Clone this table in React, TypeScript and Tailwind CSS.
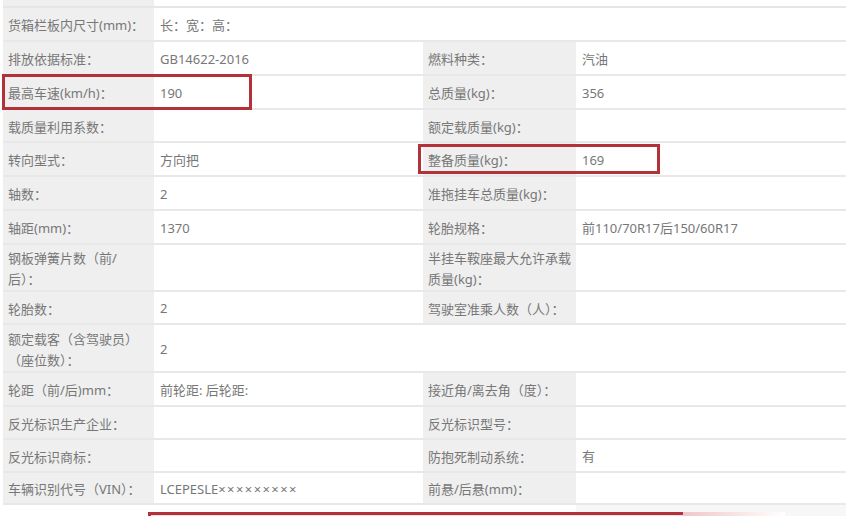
type Cell = { label: string; value?: string };
type Row = { h: number; left: Cell; right?: Cell };

const rows: Row[] = [
  { h: 34, left: { label: "货箱栏板内尺寸(mm)：", value: "长：宽：高：" } },
  { h: 34, left: { label: "排放依据标准：", value: "GB14622-2016" }, right: { label: "燃料种类：", value: "汽油" } },
  { h: 34, left: { label: "最高车速(km/h)：", value: "190" }, right: { label: "总质量(kg)：", value: "356" } },
  { h: 33, left: { label: "载质量利用系数：" }, right: { label: "额定载质量(kg)：" } },
  { h: 34, left: { label: "转向型式：", value: "方向把" }, right: { label: "整备质量(kg)：", value: "169" } },
  { h: 34, left: { label: "轴数：", value: "2" }, right: { label: "准拖挂车总质量(kg)：" } },
  { h: 34, left: { label: "轴距(mm)：", value: "1370" }, right: { label: "轮胎规格：", value: "前110/70R17后150/60R17" } },
  { h: 47, left: { label: "钢板弹簧片数（前/\n后）：" }, right: { label: "半挂车鞍座最大允许承载\n质量(kg)：" } },
  { h: 33, left: { label: "轮胎数：", value: "2" }, right: { label: "驾驶室准乘人数（人）：" } },
  { h: 48, left: { label: "额定载客（含驾驶员）\n（座位数）：", value: "2" } },
  { h: 34, left: { label: "轮距（前/后)mm：", value: "前轮距: 后轮距:" }, right: { label: "接近角/离去角（度）：" } },
  { h: 33, left: { label: "反光标识生产企业：" }, right: { label: "反光标识型号：" } },
  { h: 33, left: { label: "反光标识商标：" }, right: { label: "防抱死制动系统：", value: "有" } },
  { h: 32, left: { label: "车辆识别代号（VIN）：", value: "LCEPESLE" }, right: { label: "前悬/后悬(mm)：" } },
];

function Label({ text }: { text: string }) {
  return (
    <div className="flex items-center bg-[#efefef] pl-[5px] pt-[3px] leading-[21px] whitespace-pre-line">
      {text}
    </div>
  );
}

function Value({ text, span, vin }: { text?: string; span?: boolean; vin?: boolean }) {
  return (
    <div className={span ? "col-span-3 flex items-center bg-white pl-[6px] pt-[3px]" : "flex items-center bg-white pl-[6px] pt-[3px]"}>
      {text}
      {vin && <span className="tracking-[1.4px]">×××××××××</span>}
    </div>
  );
}

export default function App() {
  return (
    <div
      className="relative w-[852px] h-[516px] overflow-hidden bg-white text-[13px] text-[#777777]"
      style={{ fontFamily: '"Noto Sans", "Noto Sans CJK SC", sans-serif' }}
    >
      <div className="ml-[3px] w-[843px] border-r-2 border-[#e9e9e9]">
        {/* partial row at top */}
        <div className="grid grid-cols-[151px_269px_153px_270px] h-[8px] border-b-2 border-[#e6e6e6]">
          <div className="bg-[#efefef]" />
          <div className="col-span-3 bg-white" />
        </div>

        {rows.map((r, i) => (
          <div
            key={i}
            className="grid grid-cols-[151px_269px_153px_270px] border-b-2 border-[#e8e8e8]"
            style={{ height: r.h }}
          >
            <Label text={r.left.label} />
            <Value text={r.left.value} span={!r.right} vin={i === rows.length - 1} />
            {r.right && (
              <>
                <Label text={r.right.label} />
                <Value text={r.right.value} />
              </>
            )}
          </div>
        ))}

        {/* partial row at bottom */}
        <div className="grid grid-cols-[151px_269px_153px_270px] h-[12px]">
          <div className="bg-white" />
          <div className="bg-white" />
          <div className="bg-white" />
          <div className="bg-[#f7f7f7]" />
        </div>
      </div>

      {/* red annotation boxes */}
      <div className="absolute left-[2px] top-[74px] w-[250px] h-[36px] border-[3px] border-[#b3323a]" />
      <div className="absolute left-[418px] top-[144px] w-[242px] h-[30px] border-[3px] border-[#b3323a]" />
      <div className="absolute left-[148px] top-[512px] w-[535px] h-[6px] border-t-[3px] border-l-[3px] border-[#b3323a] bg-[#f3dede]" />
      <div className="absolute left-[683px] top-[512px] w-[102px] h-[4px] bg-gradient-to-r from-[#f0c6c8] to-[#ffffff]" />
    </div>
  );
}
